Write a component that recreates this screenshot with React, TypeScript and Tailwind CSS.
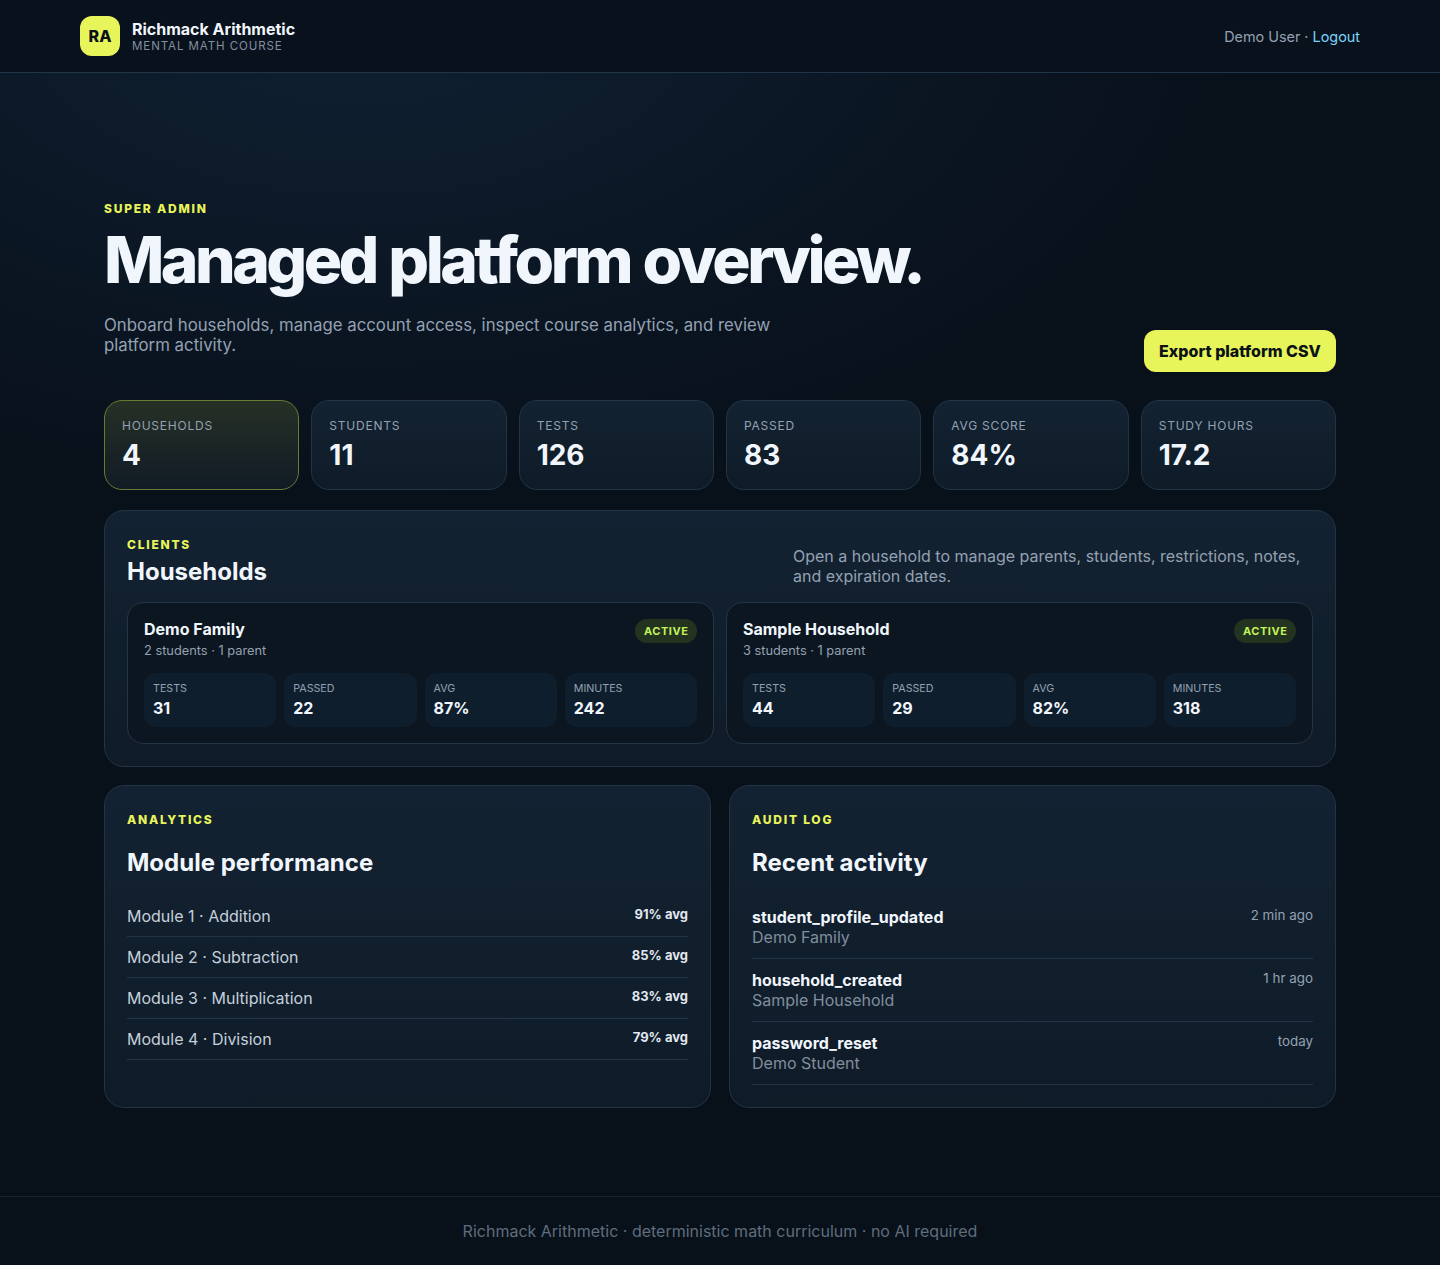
const font = { fontFamily: "Inter, 'Liberation Sans', sans-serif" };

function Eyebrow({ children }: { children: string }) {
  return <p className="text-[12px] leading-[14px] font-extrabold tracking-[0.147em] uppercase text-[#e8f55a]">{children}</p>;
}

function Stat({ label, value, active }: { label: string; value: string; active?: boolean }) {
  return (
    <div className={active
      ? "h-[90px] rounded-[18px] border border-[#6b7a33] bg-gradient-to-b from-[#273025] to-[#111b25] px-[17px] pt-[17px]"
      : "h-[90px] rounded-[18px] border border-[#233447] bg-gradient-to-b from-[#132232] to-[#0f1b27] px-[17px] pt-[17px]"}>
      <p className="text-[12px] leading-[15px] tracking-[0.065em] uppercase text-[#94a1b2]">{label}</p>
      <p className="mt-[4px] text-[28px] leading-[36px] font-bold text-[#f1f6fd]">{value}</p>
    </div>
  );
}

function Mini({ label, value }: { label: string; value: string }) {
  return (
    <div className="h-[54px] rounded-[12px] bg-[#0f1e2d] px-[9px] pt-[9px]">
      <p className="text-[10.7px] leading-[13px] uppercase text-[#94a1b2]">{label}</p>
      <p className="mt-[3px] text-[16px] leading-[20px] font-bold text-[#f1f6fd]">{value}</p>
    </div>
  );
}

function Household({ name, sub, stats }: { name: string; sub: string; stats: string[] }) {
  return (
    <div className="h-[142px] rounded-[16px] border border-[#233447] bg-[#0c1620] px-[16px] pt-[16px]">
      <div className="flex items-start justify-between">
        <div>
          <p className="text-[16px] leading-[20px] font-bold text-[#f1f6fd]">{name}</p>
          <p className="mt-[3px] text-[12.8px] leading-[18px] text-[#94a1b2]">{sub}</p>
        </div>
        <span className="rounded-full bg-[#223320] px-[8.5px] py-[5px] text-[11px] leading-[14px] font-bold tracking-[0.05em] text-[#c4f25a]">ACTIVE</span>
      </div>
      <div className="mt-[13px] grid grid-cols-4 gap-[8px]">
        <Mini label="Tests" value={stats[0]} />
        <Mini label="Passed" value={stats[1]} />
        <Mini label="Avg" value={stats[2]} />
        <Mini label="Minutes" value={stats[3]} />
      </div>
    </div>
  );
}

const panel = "rounded-[20px] border border-[#233447] bg-gradient-to-b from-[#132232] to-[#0f1b27]";

export default function App() {
  return (
    <div style={font} className="min-h-[1265px] flex flex-col bg-[#08101a] bg-[radial-gradient(ellipse_900px_500px_at_25%_0%,#0f2133_0%,#0c1826_50%,#08101a_100%)]">
      <header className="h-[73px] border-b border-[#203648] bg-[#09121c]">
        <div className="mx-auto w-[1280px] h-[72px] flex items-center justify-between">
          <div className="flex items-center gap-[12px]">
            <div className="w-[40px] h-[40px] rounded-[12px] bg-[#e8f55a] flex items-center justify-center text-[16px] font-extrabold text-[#0b1218]">RA</div>
            <div>
              <p className="text-[16px] leading-[18px] font-bold text-[#f1f6fd]">Richmack Arithmetic</p>
              <p className="mt-[1px] text-[11.5px] leading-[14px] tracking-[0.08em] uppercase text-[#8290a0]">Mental math course</p>
            </div>
          </div>
          <p className="pt-[2px] text-[14.4px] text-[#94a1b2]">Demo User · <span className="text-[#7dd3fc]">Logout</span></p>
        </div>
      </header>

      <main className="mx-auto w-[1232px] flex-1 pt-[129px]">
        <Eyebrow>Super Admin</Eyebrow>
        <h1 className="mt-[12px] text-[64px] leading-[64px] font-extrabold tracking-[-0.055em] [word-spacing:2px] text-[#f1f6fd]">Managed platform overview.</h1>
        <div className="mt-[23px] flex items-end justify-between">
          <p className="w-[700px] mb-[17px] text-[16.8px] leading-[20px] text-[#94a1b2]">Onboard households, manage account access, inspect course analytics, and review platform activity.</p>
          <button className="h-[42px] w-[192px] rounded-[12px] bg-[#e8f55a] text-[16px] font-extrabold text-[#0b1218]">Export platform CSV</button>
        </div>

        <div className="mt-[28px] grid grid-cols-6 gap-[12px]">
          <Stat label="Households" value="4" active />
          <Stat label="Students" value="11" />
          <Stat label="Tests" value="126" />
          <Stat label="Passed" value="83" />
          <Stat label="Avg Score" value="84%" />
          <Stat label="Study Hours" value="17.2" />
        </div>

        <section className={panel + " mt-[20px] h-[257px] px-[22px] pt-[27px]"}>
          <div className="flex justify-between">
            <div>
              <Eyebrow>Clients</Eyebrow>
              <h2 className="mt-[5px] text-[24px] leading-[30px] font-bold text-[#f1f6fd]">Households</h2>
            </div>
            <p className="w-[520px] mt-[8px] text-[16px] leading-[20px] text-[#94a1b2]">Open a household to manage parents, students, restrictions, notes, and expiration dates.</p>
          </div>
          <div className="mt-[15px] grid grid-cols-2 gap-[12px]">
            <Household name="Demo Family" sub="2 students · 1 parent" stats={["31", "22", "87%", "242"]} />
            <Household name="Sample Household" sub="3 students · 1 parent" stats={["44", "29", "82%", "318"]} />
          </div>
        </section>

        <div className="mt-[18px] grid grid-cols-2 gap-[18px]">
          <section className={panel + " h-[323px] px-[22px] pt-[27px]"}>
            <Eyebrow>Analytics</Eyebrow>
            <h2 className="mt-[21px] text-[24px] leading-[30px] font-bold text-[#f1f6fd]">Module performance</h2>
            <div className="mt-[18px]">
              {[["Module 1 · Addition", "91% avg"], ["Module 2 · Subtraction", "85% avg"], ["Module 3 · Multiplication", "83% avg"], ["Module 4 · Division", "79% avg"]].map(([a, b]) => (
                <div key={a} className="h-[41px] flex justify-between border-b border-[#233447] pt-[10px]">
                  <span className="text-[16px] leading-[20px] text-[#c5d0dc]">{a}</span>
                  <span className="text-[13px] leading-[16px] font-bold text-[#e2e8f0]">{b}</span>
                </div>
              ))}
            </div>
          </section>
          <section className={panel + " h-[323px] px-[22px] pt-[27px]"}>
            <Eyebrow>Audit Log</Eyebrow>
            <h2 className="mt-[21px] text-[24px] leading-[30px] font-bold text-[#f1f6fd]">Recent activity</h2>
            <div className="mt-[18px]">
              {[["student_profile_updated", "Demo Family", "2 min ago"], ["household_created", "Sample Household", "1 hr ago"], ["password_reset", "Demo Student", "today"]].map(([a, b, c]) => (
                <div key={a} className="h-[63px] flex justify-between border-b border-[#233447] pt-[11px]">
                  <div>
                    <p className="text-[16px] leading-[20px] font-bold text-[#f1f6fd]">{a}</p>
                    <p className="text-[16px] leading-[20px] text-[#808e9e]">{b}</p>
                  </div>
                  <span className="text-[13.4px] leading-[16px] text-[#94a1b2]">{c}</span>
                </div>
              ))}
            </div>
          </section>
        </div>
      </main>

      <footer className="h-[69px] border-t border-[#14242f] flex items-center justify-center text-[16px] text-[#5f6d7d]">
        Richmack Arithmetic · deterministic math curriculum · no AI required
      </footer>
    </div>
  );
}
